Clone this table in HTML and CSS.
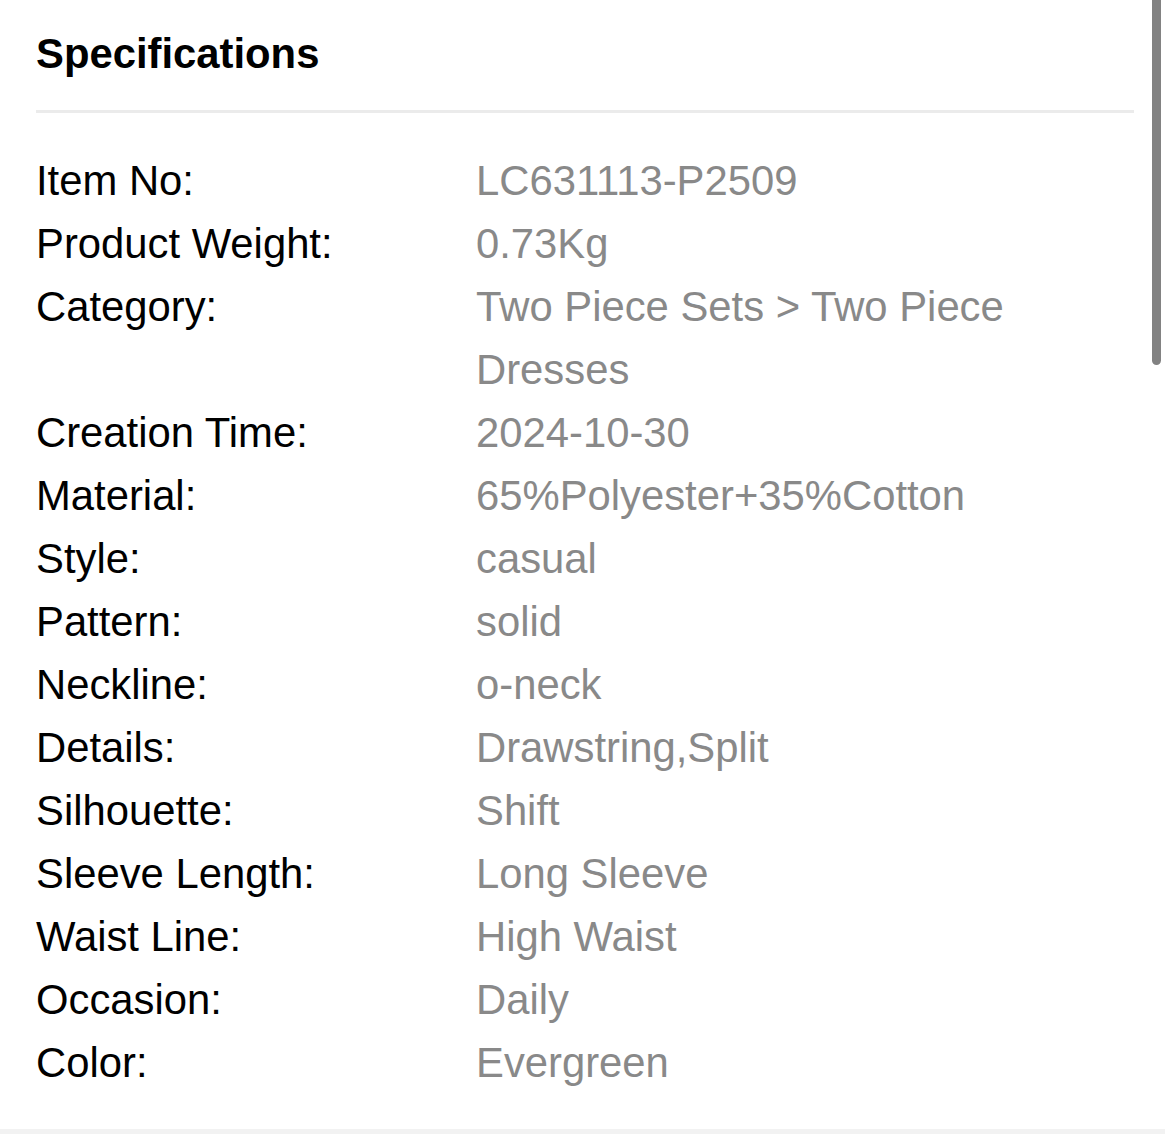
FILE: index.html
```html
<!DOCTYPE html>
<html lang="en">
<head>
<meta charset="utf-8">
<title>Specifications</title>
<link rel="stylesheet" href="styles.css">
</head>
<body>
<div class="page">
  <section class="card">
    <h2 class="title">Specifications</h2>
    <div class="divider"></div>
    <dl class="specs">
      <dt>Item No:</dt><dd>LC631113-P2509</dd>
      <dt>Product Weight:</dt><dd>0.73Kg</dd>
      <dt>Category:</dt><dd>Two Piece Sets &gt; Two Piece Dresses</dd>
      <dt>Creation Time:</dt><dd>2024-10-30</dd>
      <dt>Material:</dt><dd>65%Polyester+35%Cotton</dd>
      <dt>Style:</dt><dd>casual</dd>
      <dt>Pattern:</dt><dd>solid</dd>
      <dt>Neckline:</dt><dd>o-neck</dd>
      <dt>Details:</dt><dd>Drawstring,Split</dd>
      <dt>Silhouette:</dt><dd>Shift</dd>
      <dt>Sleeve Length:</dt><dd>Long Sleeve</dd>
      <dt>Waist Line:</dt><dd>High Waist</dd>
      <dt>Occasion:</dt><dd>Daily</dd>
      <dt>Color:</dt><dd>Evergreen</dd>
    </dl>
    <div class="scrollbar"></div>
  </section>
</div>
</body>
</html>
```

FILE: styles.css
```css
html, body {
  margin: 0;
  padding: 0;
}
body {
  background: #f2f2f2;
  font-family: "Liberation Sans", Arial, sans-serif;
  width: 1165px;
  height: 1134px;
  overflow: hidden;
}
.page {
  width: 1165px;
}
.card {
  position: relative;
  background: #ffffff;
  height: 1129px;
  box-sizing: border-box;
  padding: 30px 31px 0 36px;
}
.title {
  margin: 0;
  font-size: 41.8px;
  line-height: 47px;
  font-weight: bold;
  color: #000;
}
.divider {
  margin-top: 33px;
  height: 3px;
  background: #ebebeb;
}
.specs {
  margin: 36px 0 0 0;
  display: grid;
  grid-template-columns: 440px 1fr;
  font-size: 41.8px;
  line-height: 63px;
}
.specs dt {
  color: #000;
  margin: 0;
}
.specs dd {
  color: #898989;
  margin: 0;
}
.scrollbar {
  position: absolute;
  top: 0;
  left: 1152px;
  width: 9px;
  height: 365px;
  background: #828282;
  border-radius: 0 0 5px 5px;
}
```
